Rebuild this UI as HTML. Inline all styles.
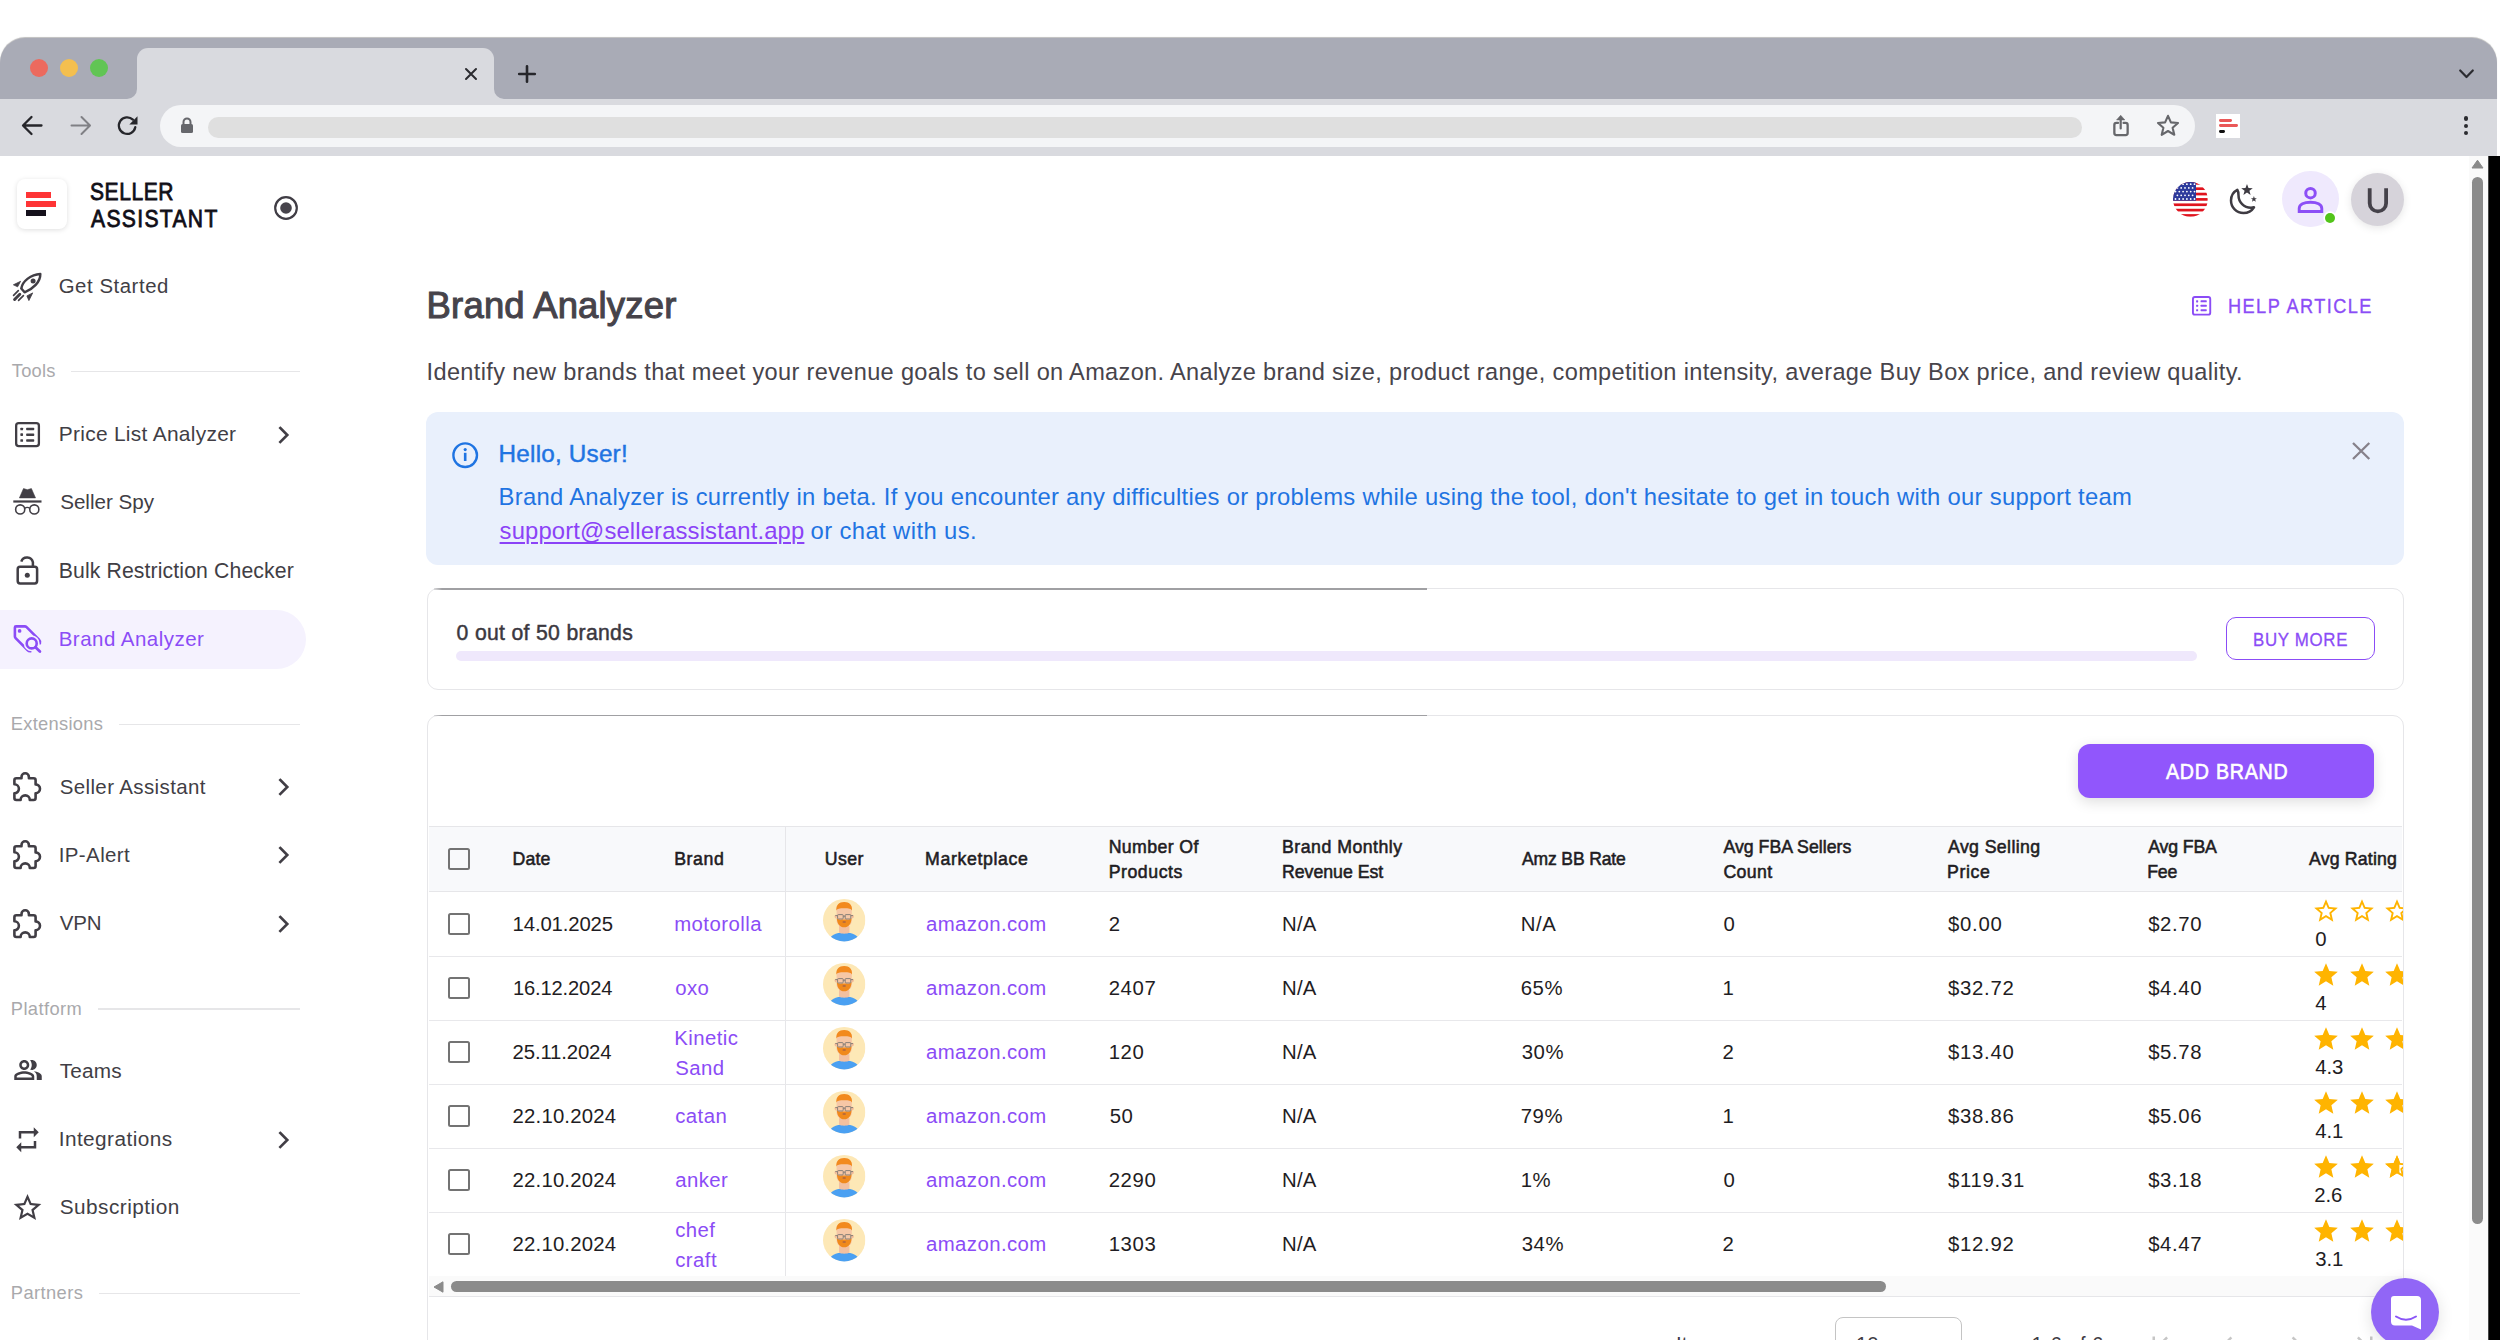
<!DOCTYPE html>
<html><head><meta charset="utf-8"><title>Brand Analyzer</title>
<style>
html,body{margin:0;padding:0;background:#fff;}
body{width:2500px;height:1340px;overflow:hidden;font-family:"Liberation Sans",sans-serif;}
#root{position:relative;width:2500px;height:1340px;overflow:hidden;background:#fff;}
.a{position:absolute;}
.t{position:absolute;white-space:nowrap;font-family:"Liberation Sans",sans-serif;}
svg{position:absolute;overflow:visible;}

</style></head><body><div id=root>
<div class=a style="left:0;top:38px;width:2497px;height:61px;background:#a9abb6;border-radius:25px 25px 0 0;box-shadow:0 -0.5px 0.8px rgba(0,0,0,0.25)"></div>
<div class=a style="left:0;top:99px;width:2497px;height:56.5px;background:#d9dadf"></div>
<div class=a style="left:30.3px;top:59.3px;width:18px;height:18px;border-radius:50%;background:#ec6a5e"></div>
<div class=a style="left:60.0px;top:59.3px;width:18px;height:18px;border-radius:50%;background:#f4bf4f"></div>
<div class=a style="left:90.0px;top:59.3px;width:18px;height:18px;border-radius:50%;background:#61c554"></div>
<div class=a style="left:137px;top:48px;width:357px;height:51px;background:#d9dadf;border-radius:11px 11px 0 0"></div>
<svg style="left:127px;top:89px" width="10" height="10"><path d="M0 10 A10 10 0 0 0 10 0 L10 10 Z" fill="#d9dadf"/></svg>
<svg style="left:494px;top:89px" width="10" height="10"><path d="M0 0 A10 10 0 0 0 10 10 L0 10 Z" fill="#d9dadf"/></svg>
<svg style="left:464.8px;top:67.8px" width="12" height="12"><path d="M1 1L11 11M11 1L1 11" stroke="#2b2b30" stroke-width="2" stroke-linecap="round"/></svg>
<svg style="left:518.4px;top:65.2px" width="18" height="18"><path d="M9 1.2V16.8M1.2 9H16.8" stroke="#26262b" stroke-width="2.6" stroke-linecap="round"/></svg>
<svg style="left:2459px;top:69px" width="15" height="10"><path d="M1.2 1.5L7.5 8L13.8 1.5" fill="none" stroke="#2b2b30" stroke-width="2.2" stroke-linecap="round" stroke-linejoin="round"/></svg>
<svg style="left:21px;top:115px" width="22" height="21"><path d="M20.5 10.5H2.5M10.5 2L2 10.5L10.5 19" fill="none" stroke="#26262b" stroke-width="2.3" stroke-linecap="round" stroke-linejoin="round"/></svg>
<svg style="left:69.5px;top:115px" width="22" height="21"><path d="M1.5 10.5H19.5M11.5 2L20 10.5L11.5 19" fill="none" stroke="#808085" stroke-width="2" stroke-linecap="round" stroke-linejoin="round"/></svg>
<svg style="left:116px;top:114px" width="24" height="24"><path d="M19.3 13.2A8.3 8.3 0 1 1 16.9 5.6" fill="none" stroke="#26262b" stroke-width="2.3" stroke-linecap="round"/><path d="M21.5 2.2V10.4H13.3Z" fill="#26262b"/></svg>
<div class=a style="left:160px;top:105.2px;width:2035px;height:41.4px;background:#f4f5f7;border-radius:21px"></div>
<svg style="left:180px;top:117px" width="14" height="17"><path d="M3.5 7V5A3.5 3.5 0 0 1 10.5 5V7" fill="none" stroke="#66676c" stroke-width="2"/><rect x="1" y="7" width="12" height="9" rx="1.5" fill="#66676c"/></svg>
<div class=a style="left:208px;top:117.2px;width:1874px;height:20.5px;background:#dfdfdf;border-radius:10.25px"></div>
<svg style="left:2110px;top:113px" width="22" height="24"><path d="M10.7 2.3L14.8 6.9H6.6Z" fill="#66676b" stroke="#66676b" stroke-width="0.6" stroke-linejoin="round"/><path d="M10.7 6V15.4" stroke="#66676b" stroke-width="2.2" stroke-linecap="round"/><path d="M8 9.95H6.35A2 2 0 0 0 4.35 11.95V20.05A2 2 0 0 0 6.35 22.05H15.65A2 2 0 0 0 17.65 20.05V11.95A2 2 0 0 0 15.65 9.95H13.6" fill="none" stroke="#66676b" stroke-width="2.3" stroke-linecap="round"/></svg>
<svg style="left:2156px;top:114px" width="24" height="23"><path d="M12 1.8L14.9 8.4L22 9L16.6 13.7L18.3 20.8L12 17L5.7 20.8L7.4 13.7L2 9L9.1 8.4Z" fill="none" stroke="#66676b" stroke-width="2.1" stroke-linejoin="round"/></svg>
<div class=a style="left:2216px;top:114px;width:24px;height:24px;background:#fff"></div>
<div class=a style="left:2218.5px;top:118.8px;width:13.5px;height:2.8px;background:#ea5858;border-radius:1.4px"></div>
<div class=a style="left:2218.5px;top:124.2px;width:19.2px;height:2.9px;background:#ea5858;border-radius:1.4px"></div>
<div class=a style="left:2218.5px;top:129.9px;width:6.6px;height:2.8px;background:#111;border-radius:1.4px"></div>
<div class=a style="left:2463.8px;top:116.3px;width:4.4px;height:4.4px;border-radius:50%;background:#2b2b30"></div>
<div class=a style="left:2463.8px;top:123.8px;width:4.4px;height:4.4px;border-radius:50%;background:#2b2b30"></div>
<div class=a style="left:2463.8px;top:131.1px;width:4.4px;height:4.4px;border-radius:50%;background:#2b2b30"></div>
<div class=a style="left:2487.6px;top:156px;width:12.4px;height:1184px;background:linear-gradient(90deg,#777 0,#000 1.2px)"></div>
<div class=a style="left:2469px;top:155.5px;width:18.6px;height:1185px;background:#fafafa"></div>
<svg style="left:2471px;top:159px" width="13" height="10"><path d="M6.5 1.2L12 9H1Z" fill="#8a8a8a" stroke="#8a8a8a" stroke-width="1" stroke-linejoin="round"/></svg>
<div class=a style="left:2472px;top:177px;width:11px;height:1047px;background:#8b8b8b;border-radius:5.5px"></div>
<div class=a style="left:16.5px;top:179px;width:50px;height:50px;background:#fff;border-radius:8px;box-shadow:0 1px 5px rgba(0,0,0,0.13)"></div>
<div class=a style="left:26px;top:192.3px;width:24.8px;height:5.8px;background:#fe3435"></div>
<div class=a style="left:26px;top:201.2px;width:30px;height:5.8px;background:#fe3435"></div>
<div class=a style="left:26px;top:210.3px;width:19.7px;height:5.7px;background:#15111c"></div>
<div class=t style="left:90.14px;top:180.02px;font-size:24.42px;line-height:24.42px;color:#100e16;font-weight:400;letter-spacing:0.673px;transform:scaleX(0.8600);transform-origin:0 0;-webkit-text-stroke:0.8px #100e16;">SELLER</div>
<div class=t style="left:91.00px;top:206.89px;font-size:23.98px;line-height:23.98px;color:#100e16;font-weight:400;letter-spacing:1.512px;transform:scaleX(0.8800);transform-origin:0 0;-webkit-text-stroke:0.8px #100e16;">ASSISTANT</div>
<svg style="left:274px;top:195.5px" width="24" height="24"><circle cx="12" cy="12" r="10.8" fill="none" stroke="#403d45" stroke-width="2.2"/><circle cx="12" cy="12" r="5.8" fill="#46434b"/></svg>
<svg style="left:0px;top:265px" width="60" height="45" viewBox="0 265 60 45"><path d="M21.3 288.5C22.5 281 31 274.5 40.3 274C40.5 282 33 289 24.6 292.3Z" fill="none" stroke="#413e45" stroke-width="2.5" stroke-linejoin="round"/><circle cx="33.1" cy="281" r="2.5" fill="#413e45"/><path d="M13.4 284.8L20.6 281.3L17.6 286.8Z" fill="#413e45" stroke="#413e45" stroke-width="0.8" stroke-linejoin="round"/><path d="M26.9 295.9L32.7 292.9L28.9 300.6Z" fill="#413e45" stroke="#413e45" stroke-width="0.8" stroke-linejoin="round"/><path d="M13.6 295.3L18.3 290.6M18.6 300.3L23.4 295.6" stroke="#413e45" stroke-width="1.7" stroke-linecap="round"/><path d="M14.6 299.5L19.8 294.3" stroke="#413e45" stroke-width="3" stroke-linecap="round"/></svg>
<div class=t style="left:58.70px;top:275.87px;font-size:20.35px;line-height:20.35px;color:#413e45;font-weight:400;letter-spacing:0.565px;">Get Started</div>
<div class=t style="left:11.80px;top:362.39px;font-size:18.31px;line-height:18.31px;color:#a9a9ac;font-weight:400;letter-spacing:0.234px;">Tools</div>
<div class=a style="left:71.3px;top:370.75px;width:228.7px;height:1.5px;background:#e6e6e8"></div>
<svg style="left:12.85px;top:419.90px" width="29.05" height="29.20" viewBox="12.85 419.90 29.05 29.20"><rect x="16.00" y="423.05" width="22.75" height="22.90" rx="2.60" fill="none" stroke="#413e45" stroke-width="2.3"/><rect x="20.20" y="427.55" width="2.70" height="2.70" rx="0.70" fill="#413e45"/><rect x="26.00" y="427.60" width="8.10" height="2.60" rx="0.70" fill="#413e45"/><rect x="20.20" y="433.25" width="2.70" height="2.70" rx="0.70" fill="#413e45"/><rect x="26.00" y="433.30" width="8.10" height="2.60" rx="0.70" fill="#413e45"/><rect x="20.20" y="439.05" width="2.70" height="2.70" rx="0.70" fill="#413e45"/><rect x="26.00" y="439.10" width="8.10" height="2.60" rx="0.70" fill="#413e45"/></svg>
<div class=t style="left:58.70px;top:424.08px;font-size:20.93px;line-height:20.93px;color:#413e45;font-weight:400;letter-spacing:0.295px;">Price List Analyzer</div>
<svg style="left:277.5px;top:425.5px" width="12" height="18"><path d="M2.3 2L9.3 9L2.3 16" fill="none" stroke="#413e45" stroke-width="2.6" stroke-linecap="square" stroke-linejoin="miter"/></svg>
<svg style="left:0px;top:480px" width="60" height="40" viewBox="0 480 60 40"><path d="M19.4 497.9L23.5 488.6L27.3 489.7L31.4 488.6L35.5 497.9Z" fill="#413e45" stroke="#413e45" stroke-width="0.6" stroke-linejoin="round"/><rect x="13.3" y="500.4" width="28.2" height="2.2" fill="#413e45"/><circle cx="20.2" cy="509.4" r="4.55" fill="none" stroke="#413e45" stroke-width="1.6"/><circle cx="34.3" cy="509.4" r="4.55" fill="none" stroke="#413e45" stroke-width="1.6"/><path d="M24.6 508.5Q27.3 506.3 29.9 508.5" fill="none" stroke="#413e45" stroke-width="1.4"/></svg>
<div class=t style="left:60.20px;top:491.52px;font-size:20.64px;line-height:20.64px;color:#413e45;font-weight:400;letter-spacing:-0.021px;">Seller Spy</div>
<svg style="left:0px;top:540px" width="60" height="130" viewBox="0 540 60 130"><rect x="17.7" y="566.8" width="19.4" height="16.6" rx="2.4" fill="none" stroke="#413e45" stroke-width="2.5"/><path d="M21.3 561.6A6 6 0 0 1 32.9 562.3V566.8" fill="none" stroke="#413e45" stroke-width="2.5"/><circle cx="27.3" cy="575.3" r="2.5" fill="#413e45"/></svg>
<div class=t style="left:58.70px;top:560.03px;font-size:21.22px;line-height:21.22px;color:#413e45;font-weight:400;letter-spacing:0.120px;">Bulk Restriction Checker</div>
<div class=a style="left:0;top:610px;width:306px;height:59px;background:#f5f2fe;border-radius:0 29.5px 29.5px 0"></div>
<svg style="left:0px;top:610px" width="60" height="60" viewBox="0 610 60 60"><path d="M39.9 643.2Q40.6 641.2 38.8 639.4L26.6 627.2Q25.8 626.4 24.7 626.4L16 626.4Q14.9 626.4 14.9 627.5L14.9 636.5Q14.9 637.4 15.6 638.1L27.5 650Q28.7 651.2 30.3 651.3" fill="none" stroke="#8b4cf6" stroke-width="2.6" stroke-linecap="round"/><circle cx="19.6" cy="630.9" r="1.85" fill="#8b4cf6"/><circle cx="31.7" cy="643.4" r="5.6" fill="none" stroke="#f5f2fe" stroke-width="4.6"/><circle cx="31.7" cy="643.4" r="5" fill="none" stroke="#8b4cf6" stroke-width="2.6"/><path d="M35.5 647.3L39.9 651.6" stroke="#8b4cf6" stroke-width="2.8" stroke-linecap="round"/></svg>
<div class=t style="left:58.70px;top:628.95px;font-size:20.49px;line-height:20.49px;color:#8b4cf6;font-weight:400;letter-spacing:0.482px;">Brand Analyzer</div>
<div class=t style="left:10.80px;top:715.19px;font-size:18.31px;line-height:18.31px;color:#a9a9ac;font-weight:400;letter-spacing:0.294px;">Extensions</div>
<div class=a style="left:118.8px;top:723.85px;width:181.2px;height:1.5px;background:#e6e6e8"></div>
<svg style="left:0px;top:765.0px" width="60" height="45" viewBox="0 765 60 45"><path d="M14.4 780.3Q14.4 778.3 16.4 778.3L21.5 778.3L21.5 777A3.7 3.7 0 0 1 28.9 777L28.9 778.3L33.6 778.3Q35.6 778.3 35.6 780.3L35.6 784.4A4.4 4.4 0 0 1 35.6 793.2L35.6 798Q35.6 800 33.6 800L29.8 800A4.6 4.6 0 0 0 20.6 800L16.4 800Q14.4 800 14.4 798L14.4 793.3A4.5 4.5 0 0 0 14.4 784.3Z" fill="none" stroke="#413e45" stroke-width="2.6" stroke-linejoin="round"/></svg>
<div class=t style="left:59.70px;top:776.55px;font-size:20.49px;line-height:20.49px;color:#413e45;font-weight:400;letter-spacing:0.381px;">Seller Assistant</div>
<svg style="left:277.5px;top:778.3px" width="12" height="18"><path d="M2.3 2L9.3 9L2.3 16" fill="none" stroke="#413e45" stroke-width="2.6" stroke-linecap="square" stroke-linejoin="miter"/></svg>
<svg style="left:0px;top:833.4px" width="60" height="45" viewBox="0 765 60 45"><path d="M14.4 780.3Q14.4 778.3 16.4 778.3L21.5 778.3L21.5 777A3.7 3.7 0 0 1 28.9 777L28.9 778.3L33.6 778.3Q35.6 778.3 35.6 780.3L35.6 784.4A4.4 4.4 0 0 1 35.6 793.2L35.6 798Q35.6 800 33.6 800L29.8 800A4.6 4.6 0 0 0 20.6 800L16.4 800Q14.4 800 14.4 798L14.4 793.3A4.5 4.5 0 0 0 14.4 784.3Z" fill="none" stroke="#413e45" stroke-width="2.6" stroke-linejoin="round"/></svg>
<div class=t style="left:58.70px;top:844.65px;font-size:20.49px;line-height:20.49px;color:#413e45;font-weight:400;letter-spacing:0.400px;">IP-Alert</div>
<svg style="left:277.5px;top:846.3px" width="12" height="18"><path d="M2.3 2L9.3 9L2.3 16" fill="none" stroke="#413e45" stroke-width="2.6" stroke-linecap="square" stroke-linejoin="miter"/></svg>
<svg style="left:0px;top:901.8px" width="60" height="45" viewBox="0 765 60 45"><path d="M14.4 780.3Q14.4 778.3 16.4 778.3L21.5 778.3L21.5 777A3.7 3.7 0 0 1 28.9 777L28.9 778.3L33.6 778.3Q35.6 778.3 35.6 780.3L35.6 784.4A4.4 4.4 0 0 1 35.6 793.2L35.6 798Q35.6 800 33.6 800L29.8 800A4.6 4.6 0 0 0 20.6 800L16.4 800Q14.4 800 14.4 798L14.4 793.3A4.5 4.5 0 0 0 14.4 784.3Z" fill="none" stroke="#413e45" stroke-width="2.6" stroke-linejoin="round"/></svg>
<div class=t style="left:59.70px;top:913.25px;font-size:20.49px;line-height:20.49px;color:#413e45;font-weight:400;letter-spacing:-0.150px;">VPN</div>
<svg style="left:277.5px;top:915.0px" width="12" height="18"><path d="M2.3 2L9.3 9L2.3 16" fill="none" stroke="#413e45" stroke-width="2.6" stroke-linecap="square" stroke-linejoin="miter"/></svg>
<div class=t style="left:10.80px;top:999.89px;font-size:18.31px;line-height:18.31px;color:#a9a9ac;font-weight:400;letter-spacing:0.403px;">Platform</div>
<div class=a style="left:97.5px;top:1008.25px;width:202.5px;height:1.5px;background:#e6e6e8"></div>
<svg style="left:12.5px;top:1059px" width="30" height="23" viewBox="0 4 24 17"><path fill="#413e45" d="M16.67 13.13C18.04 14.06 19 15.32 19 17v3h4v-3c0-2.18-3.57-3.47-6.33-3.87zM15 12c2.21 0 4-1.79 4-4s-1.79-4-4-4c-.47 0-.91.1-1.33.24C14.5 5.27 15 6.58 15 8s-.5 2.73-1.33 3.76c.42.14.86.24 1.33.24zm-6 0c2.21 0 4-1.79 4-4s-1.79-4-4-4-4 1.79-4 4 1.79 4 4 4zm0-6c1.1 0 2 .9 2 2s-.9 2-2 2-2-.9-2-2 .9-2 2-2zm0 7c-2.67 0-8 1.34-8 4v3h16v-3c0-2.66-5.33-4-8-4zm6 5H3v-.99C3.2 16.29 6.3 15 9 15s5.8 1.29 6 2v1z"/></svg>
<div class=t style="left:59.70px;top:1060.60px;font-size:20.79px;line-height:20.79px;color:#413e45;font-weight:400;letter-spacing:0.181px;">Teams</div>
<svg style="left:14px;top:1126px" width="27" height="27.5" viewBox="3 1 18 22"><path fill="#413e45" d="M7 7h10v3l4-4-4-4v3H5v6h2V7zm10 10H7v-3l-4 4 4 4v-3h12v-6h-2v4z"/></svg>
<div class=t style="left:58.70px;top:1129.30px;font-size:20.79px;line-height:20.79px;color:#413e45;font-weight:400;letter-spacing:0.443px;">Integrations</div>
<svg style="left:277.5px;top:1131.3px" width="12" height="18"><path d="M2.3 2L9.3 9L2.3 16" fill="none" stroke="#413e45" stroke-width="2.6" stroke-linecap="square" stroke-linejoin="miter"/></svg>
<svg style="left:12.5px;top:1193px" width="29" height="28" viewBox="1.5 1.5 21 20"><path fill="#413e45" d="M22 9.24l-7.19-.62L12 2 9.19 8.63 2 9.24l5.46 4.73L5.82 21 12 17.27 18.18 21l-1.63-7.03L22 9.24zM12 15.4l-3.76 2.27 1-4.28-3.32-2.88 4.38-.38L12 6.1l1.71 4.04 4.38.38-3.32 2.88 1 4.28L12 15.4z"/></svg>
<div class=t style="left:59.70px;top:1197.00px;font-size:20.79px;line-height:20.79px;color:#413e45;font-weight:400;letter-spacing:0.471px;">Subscription</div>
<div class=t style="left:10.80px;top:1283.59px;font-size:18.31px;line-height:18.31px;color:#a9a9ac;font-weight:400;letter-spacing:0.414px;">Partners</div>
<div class=a style="left:98.7px;top:1292.75px;width:201.3px;height:1.5px;background:#e6e6e8"></div>
<svg style="left:2172.6px;top:181.8px" width="34.8" height="34.8" viewBox="0 0 34.8 34.8"><defs><clipPath id="fc"><circle cx="17.4" cy="17.4" r="17.4"/></clipPath></defs><g clip-path="url(#fc)"><rect width="34.8" height="34.8" fill="#fff"/><rect x="0" y="0.00" width="34.8" height="2.68" fill="#e0141e"/><rect x="0" y="5.35" width="34.8" height="2.68" fill="#e0141e"/><rect x="0" y="10.71" width="34.8" height="2.68" fill="#e0141e"/><rect x="0" y="16.06" width="34.8" height="2.68" fill="#e0141e"/><rect x="0" y="21.42" width="34.8" height="2.68" fill="#e0141e"/><rect x="0" y="26.77" width="34.8" height="2.68" fill="#e0141e"/><rect x="0" y="32.12" width="34.8" height="2.68" fill="#e0141e"/><rect x="0" y="0" width="23" height="18.74" fill="#2d3a9c"/><circle cx="2.5" cy="2.2" r="0.9" fill="#fff"/><circle cx="6.3" cy="2.2" r="0.9" fill="#fff"/><circle cx="10.1" cy="2.2" r="0.9" fill="#fff"/><circle cx="13.9" cy="2.2" r="0.9" fill="#fff"/><circle cx="17.7" cy="2.2" r="0.9" fill="#fff"/><circle cx="21.5" cy="2.2" r="0.9" fill="#fff"/><circle cx="4.4" cy="5.9" r="0.9" fill="#fff"/><circle cx="8.2" cy="5.9" r="0.9" fill="#fff"/><circle cx="12.0" cy="5.9" r="0.9" fill="#fff"/><circle cx="15.8" cy="5.9" r="0.9" fill="#fff"/><circle cx="19.6" cy="5.9" r="0.9" fill="#fff"/><circle cx="2.5" cy="9.6" r="0.9" fill="#fff"/><circle cx="6.3" cy="9.6" r="0.9" fill="#fff"/><circle cx="10.1" cy="9.6" r="0.9" fill="#fff"/><circle cx="13.9" cy="9.6" r="0.9" fill="#fff"/><circle cx="17.7" cy="9.6" r="0.9" fill="#fff"/><circle cx="21.5" cy="9.6" r="0.9" fill="#fff"/><circle cx="4.4" cy="13.3" r="0.9" fill="#fff"/><circle cx="8.2" cy="13.3" r="0.9" fill="#fff"/><circle cx="12.0" cy="13.3" r="0.9" fill="#fff"/><circle cx="15.8" cy="13.3" r="0.9" fill="#fff"/><circle cx="19.6" cy="13.3" r="0.9" fill="#fff"/><circle cx="2.5" cy="17.0" r="0.9" fill="#fff"/><circle cx="6.3" cy="17.0" r="0.9" fill="#fff"/><circle cx="10.1" cy="17.0" r="0.9" fill="#fff"/><circle cx="13.9" cy="17.0" r="0.9" fill="#fff"/><circle cx="17.7" cy="17.0" r="0.9" fill="#fff"/><circle cx="21.5" cy="17.0" r="0.9" fill="#fff"/></g></svg>
<svg style="left:2228.6px;top:182.6px" width="30" height="32" viewBox="0 0 30 32"><path d="M8.3 6.8C4 9 2 13 2 17.5C2 24.5 7.5 30 14.5 30C19 30 22.8 27.8 25 24.3C24 24.6 23 24.8 22 24.8C15 24.8 9.5 19.2 9.5 12.3C9.5 10.3 9.5 8.5 8.3 6.8Z" fill="none" stroke="#3e3b42" stroke-width="2.5" stroke-linejoin="round"/><path d="M19.8 2.2L21.3 6.3L25.6 6.4L22.2 9L23.4 13.1L19.8 10.7L16.2 13.1L17.4 9L14 6.4L18.3 6.3Z" fill="#3e3b42" transform="translate(-1.8,-1.2)"/><path d="M26.5 15.5L27.3 17.6L29.5 17.7L27.8 19L28.4 21.1L26.5 19.9L24.6 21.1L25.2 19L23.5 17.7L25.7 17.6Z" fill="#3e3b42" transform="translate(-1.6,-2.4) scale(1.0)"/></svg>
<div class=a style="left:2282.4px;top:170.7px;width:56.6px;height:56.6px;border-radius:50%;background:#efe9fd"></div>
<svg style="left:2296px;top:185px" width="30" height="30" viewBox="0 0 30 30"><circle cx="14.5" cy="8.2" r="4.75" fill="none" stroke="#8c4ff6" stroke-width="3"/><path d="M3.2 26.5V23.5C3.2 19.5 8 17.2 14.5 17.2C21 17.2 25.8 19.5 25.8 23.5V26.5Z" fill="none" stroke="#8c4ff6" stroke-width="2.9" stroke-linejoin="miter"/></svg>
<div class=a style="left:2325px;top:213.2px;width:10px;height:10px;border-radius:50%;background:#52c41a;box-shadow:0 0 0 1.7px #fff"></div>
<div class=a style="left:2350.8px;top:172.7px;width:53px;height:53px;border-radius:50%;background:#d6d3da;box-shadow:0 2px 8px rgba(0,0,0,0.10)"></div>
<svg style="left:2360px;top:180px" width="36" height="40" viewBox="2360 180 36 40"><path d="M2369.7 188.2V203.2A8.2 8.2 0 0 0 2386.1 203.2V188.2" fill="none" stroke="#45424a" stroke-width="3.8"/></svg>
<div class=t style="left:426.60px;top:287.51px;font-size:36.48px;line-height:36.48px;color:#46434a;font-weight:400;letter-spacing:0.185px;-webkit-text-stroke:1.05px #46434a;">Brand Analyzer</div>
<svg style="left:2190.00px;top:294.00px" width="23.20" height="23.60" viewBox="2190.00 294.00 23.20 23.60"><rect x="2192.95" y="296.95" width="17.30" height="17.70" rx="1.99" fill="none" stroke="#8b4cf6" stroke-width="1.9"/><rect x="2196.10" y="300.33" width="2.07" height="2.07" rx="0.54" fill="#8b4cf6"/><rect x="2200.55" y="300.37" width="6.21" height="1.99" rx="0.54" fill="#8b4cf6"/><rect x="2196.10" y="304.70" width="2.07" height="2.07" rx="0.54" fill="#8b4cf6"/><rect x="2200.55" y="304.74" width="6.21" height="1.99" rx="0.54" fill="#8b4cf6"/><rect x="2196.10" y="309.14" width="2.07" height="2.07" rx="0.54" fill="#8b4cf6"/><rect x="2200.55" y="309.18" width="6.21" height="1.99" rx="0.54" fill="#8b4cf6"/></svg>
<div class=t style="left:2227.52px;top:296.42px;font-size:20.64px;line-height:20.64px;color:#8b4cf6;font-weight:400;letter-spacing:1.650px;transform:scaleX(0.8800);transform-origin:0 0;-webkit-text-stroke:0.35px #8b4cf6;">HELP ARTICLE</div>
<div class=t style="left:426.60px;top:360.76px;font-size:23.55px;line-height:23.55px;color:#47444b;font-weight:400;letter-spacing:0.346px;">Identify new brands that meet your revenue goals to sell on Amazon. Analyze brand size, product range, competition intensity, average Buy Box price, and review quality.</div>
<div class=a style="left:426.4px;top:412.1px;width:1977.8px;height:152.8px;background:#e9f0fc;border-radius:12px"></div>
<svg style="left:451.5px;top:441.6px" width="26.4" height="26.4" viewBox="0 0 26.4 26.4"><circle cx="13.2" cy="13.2" r="11.8" fill="none" stroke="#1f74e2" stroke-width="2.4"/><rect x="11.9" y="10.8" width="2.6" height="8.2" fill="#1f74e2"/><circle cx="13.2" cy="7.6" r="1.55" fill="#1f74e2"/></svg>
<div class=t style="left:498.60px;top:441.85px;font-size:24.27px;line-height:24.27px;color:#1f74e2;font-weight:400;letter-spacing:0.208px;-webkit-text-stroke:0.45px #1f74e2;">Hello, User!</div>
<div class=t style="left:498.60px;top:484.62px;font-size:23.84px;line-height:23.84px;color:#1f74e2;font-weight:400;letter-spacing:0.280px;">Brand Analyzer is currently in beta. If you encounter any difficulties or problems while using the tool, don't hesitate to get in touch with our support team</div>
<div class=t style="left:499.60px;top:518.82px;font-size:23.84px;line-height:23.84px;color:#8b42f7;font-weight:400;letter-spacing:0.140px;text-decoration:underline;text-decoration-thickness:1.6px;text-underline-offset:3px;">support@sellerassistant.app</div>
<div class=t style="left:810.50px;top:518.82px;font-size:23.84px;line-height:23.84px;color:#1f74e2;font-weight:400;letter-spacing:0.392px;">or chat with us.</div>
<svg style="left:2351.6px;top:441.8px" width="18.3" height="18" viewBox="0 0 18.3 18"><path d="M1 1L17.3 17M17.3 1L1 17" stroke="#86818a" stroke-width="2.3"/></svg>
<div class=a style="left:426.8px;top:588.3px;width:1977.6px;height:102.2px;border:1.8px solid #e6e6e9;border-radius:11px;box-sizing:border-box"></div>
<div class=a style="left:434px;top:588.3px;width:993px;height:1.9px;background:linear-gradient(90deg,rgba(160,160,163,0.3),#a0a0a3 8px)"></div>
<div class=t style="left:456.60px;top:622.23px;font-size:21.22px;line-height:21.22px;color:#3b383f;font-weight:400;letter-spacing:0.303px;-webkit-text-stroke:0.45px #3b383f;">0 out of 50 brands</div>
<div class=a style="left:456px;top:650.7px;width:1741px;height:10.5px;background:#efe8fc;border-radius:5.25px"></div>
<div class=a style="left:2225.5px;top:617.2px;width:149px;height:43px;border:1.8px solid #8b4cf6;border-radius:10px;box-sizing:border-box"></div>
<div class=t style="left:2252.92px;top:629.95px;font-size:19.19px;line-height:19.19px;color:#8b4cf6;font-weight:400;letter-spacing:0.760px;transform:scaleX(0.8800);transform-origin:0 0;-webkit-text-stroke:0.3px #8b4cf6;">BUY MORE</div>
<div class=a style="left:426.8px;top:714.5px;width:1977.6px;height:700px;border:1.8px solid #e6e6e9;border-radius:11px;box-sizing:border-box"></div>
<div class=a style="left:434px;top:714.5px;width:993px;height:1.9px;background:linear-gradient(90deg,rgba(160,160,163,0.3),#a0a0a3 8px)"></div>
<div class=a style="left:2077.6px;top:743.6px;width:296.8px;height:54.3px;background:#9156fc;border-radius:12px;box-shadow:0 4px 14px rgba(0,0,0,0.13)"></div>
<div class=t style="left:2166.00px;top:760.64px;font-size:21.80px;line-height:21.80px;color:#ffffff;font-weight:400;letter-spacing:0.851px;transform:scaleX(0.9000);transform-origin:0 0;-webkit-text-stroke:0.65px #fff;">ADD BRAND</div>
<div class=a style="left:428.5px;top:826px;width:1973.5px;height:66.4px;background:#f8f9fb;border-top:1.5px solid #e6e6e9;border-bottom:1.5px solid #e6e6e9;box-sizing:border-box"></div>
<div class=a style="left:784.5px;top:826px;width:1.5px;height:450px;background:#e6e6e9"></div>
<div class=a style="left:448px;top:848.4px;width:21.6px;height:21.6px;border:2.3px solid #737373;border-radius:2.5px;box-sizing:border-box"></div>
<div class=t style="left:512.60px;top:851.19px;font-size:17.73px;line-height:17.73px;color:#1f1d23;font-weight:400;letter-spacing:0.076px;-webkit-text-stroke:0.55px #1f1d23;">Date</div>
<div class=t style="left:674.20px;top:851.19px;font-size:17.73px;line-height:17.73px;color:#1f1d23;font-weight:400;letter-spacing:0.568px;-webkit-text-stroke:0.55px #1f1d23;">Brand</div>
<div class=t style="left:824.80px;top:851.19px;font-size:17.73px;line-height:17.73px;color:#1f1d23;font-weight:400;letter-spacing:0.430px;-webkit-text-stroke:0.55px #1f1d23;">User</div>
<div class=t style="left:925.00px;top:851.19px;font-size:17.73px;line-height:17.73px;color:#1f1d23;font-weight:400;letter-spacing:0.634px;-webkit-text-stroke:0.55px #1f1d23;">Marketplace</div>
<div class=t style="left:1108.70px;top:838.89px;font-size:17.73px;line-height:17.73px;color:#1f1d23;font-weight:400;letter-spacing:0.384px;-webkit-text-stroke:0.55px #1f1d23;">Number Of</div>
<div class=t style="left:1108.70px;top:863.79px;font-size:17.73px;line-height:17.73px;color:#1f1d23;font-weight:400;letter-spacing:0.534px;-webkit-text-stroke:0.55px #1f1d23;">Products</div>
<div class=t style="left:1282.00px;top:838.89px;font-size:17.73px;line-height:17.73px;color:#1f1d23;font-weight:400;letter-spacing:0.493px;-webkit-text-stroke:0.55px #1f1d23;">Brand Monthly</div>
<div class=t style="left:1282.00px;top:863.79px;font-size:17.73px;line-height:17.73px;color:#1f1d23;font-weight:400;letter-spacing:-0.023px;-webkit-text-stroke:0.55px #1f1d23;">Revenue Est</div>
<div class=t style="left:1521.70px;top:851.19px;font-size:17.73px;line-height:17.73px;color:#1f1d23;font-weight:400;letter-spacing:-0.150px;transform:scaleX(0.9896);transform-origin:0 0;-webkit-text-stroke:0.55px #1f1d23;">Amz BB Rate</div>
<div class=t style="left:1723.40px;top:838.89px;font-size:17.73px;line-height:17.73px;color:#1f1d23;font-weight:400;letter-spacing:0.020px;-webkit-text-stroke:0.55px #1f1d23;">Avg FBA Sellers</div>
<div class=t style="left:1723.40px;top:863.79px;font-size:17.73px;line-height:17.73px;color:#1f1d23;font-weight:400;letter-spacing:0.360px;-webkit-text-stroke:0.55px #1f1d23;">Count</div>
<div class=t style="left:1948.00px;top:838.89px;font-size:17.73px;line-height:17.73px;color:#1f1d23;font-weight:400;letter-spacing:0.383px;-webkit-text-stroke:0.55px #1f1d23;">Avg Selling</div>
<div class=t style="left:1947.00px;top:863.79px;font-size:17.73px;line-height:17.73px;color:#1f1d23;font-weight:400;letter-spacing:0.621px;-webkit-text-stroke:0.55px #1f1d23;">Price</div>
<div class=t style="left:2148.20px;top:838.89px;font-size:17.73px;line-height:17.73px;color:#1f1d23;font-weight:400;letter-spacing:-0.150px;-webkit-text-stroke:0.55px #1f1d23;">Avg FBA</div>
<div class=t style="left:2147.20px;top:863.79px;font-size:17.73px;line-height:17.73px;color:#1f1d23;font-weight:400;letter-spacing:-0.150px;-webkit-text-stroke:0.55px #1f1d23;">Fee</div>
<div class=t style="left:2309.00px;top:850.89px;font-size:17.73px;line-height:17.73px;color:#1f1d23;font-weight:400;letter-spacing:0.178px;-webkit-text-stroke:0.55px #1f1d23;">Avg Rating</div>
<div class=a style="left:448px;top:913.4px;width:21.6px;height:21.6px;border:2.3px solid #737373;border-radius:2.5px;box-sizing:border-box"></div>
<div class=t style="left:512.60px;top:913.57px;font-size:20.35px;line-height:20.35px;color:#1f1d23;font-weight:400;letter-spacing:-0.150px;">14.01.2025</div>
<div class=t style="left:674.20px;top:913.57px;font-size:20.35px;line-height:20.35px;color:#8b4cf6;font-weight:400;letter-spacing:0.450px;">motorolla</div>
<svg style="left:823.1px;top:898.8px" width="42.4" height="42.4" viewBox="0 0 42.4 42.4"><defs><clipPath id="av0"><circle cx="21.2" cy="21.2" r="21.2"/></clipPath></defs><g clip-path="url(#av0)"><rect width="42.4" height="42.4" fill="#fde8b6"/><path d="M5 44C6.5 36.5 12 33.6 21.2 33.6C30.4 33.6 36 36.5 37.5 44Z" fill="#4aa0f2"/><path d="M16 27H26.4V33.6C24.5 35.2 18 35.2 16 33.6Z" fill="#f3c0a0"/><ellipse cx="12.8" cy="17.6" rx="1.2" ry="1.8" fill="#f3bc98"/><ellipse cx="29.6" cy="17.6" rx="1.2" ry="1.8" fill="#f3bc98"/><path d="M13.6 9.5C13.6 6 16.5 3.4 21.2 3.4C25.9 3.4 28.8 6 28.8 9.5V21.5C28.8 25.5 25.5 28.2 21.2 28.2C16.9 28.2 13.6 25.5 13.6 21.5Z" fill="#f6c7a6"/><path d="M13.4 11.5C13 6 15.8 3 21.2 3C26.6 3 29.4 6 29 11.5C28 9.5 26 9.2 21.2 9.2C16.4 9.2 14.4 9.5 13.4 11.5Z" fill="#f28a1e"/><path d="M13.8 19C14.2 25.5 17 28.3 21.2 28.3C25.4 28.3 28.2 25.5 28.6 19C27.3 21.2 25.8 20.6 21.2 20.6C16.6 20.6 15.1 21.2 13.8 19Z" fill="#f0891c"/><ellipse cx="21.2" cy="23" rx="1.8" ry="1" fill="#b96a3a"/><rect x="14.6" y="15.6" width="5.6" height="4.4" rx="0.8" fill="none" stroke="#7d7873" stroke-width="0.9"/><rect x="22.2" y="15.6" width="5.6" height="4.4" rx="0.8" fill="none" stroke="#7d7873" stroke-width="0.9"/><path d="M20.2 17.2H22.2M12.3 16.6H14.6M27.8 16.6H30.1" stroke="#7d7873" stroke-width="0.9"/></g></svg>
<div class=t style="left:926.00px;top:913.57px;font-size:20.35px;line-height:20.35px;color:#8b4cf6;font-weight:400;letter-spacing:0.418px;">amazon.com</div>
<div class=t style="left:1108.70px;top:913.57px;font-size:20.35px;line-height:20.35px;color:#1f1d23;font-weight:400;letter-spacing:0.600px;">2</div>
<div class=t style="left:1282.00px;top:913.57px;font-size:20.35px;line-height:20.35px;color:#1f1d23;font-weight:400;letter-spacing:0.200px;">N/A</div>
<div class=t style="left:1520.70px;top:913.57px;font-size:20.35px;line-height:20.35px;color:#1f1d23;font-weight:400;letter-spacing:0.600px;">N/A</div>
<div class=t style="left:1723.40px;top:913.57px;font-size:20.35px;line-height:20.35px;color:#1f1d23;font-weight:400;letter-spacing:0.000px;">0</div>
<div class=t style="left:1948.00px;top:913.57px;font-size:20.35px;line-height:20.35px;color:#1f1d23;font-weight:400;letter-spacing:0.700px;">$0.00</div>
<div class=t style="left:2148.20px;top:913.57px;font-size:20.35px;line-height:20.35px;color:#1f1d23;font-weight:400;letter-spacing:0.600px;">$2.70</div>
<svg style="left:2313.2px;top:898.0px" width="26" height="26" viewBox="1 1 22 22"><path d="M22 9.24l-7.19-.62L12 2 9.19 8.63 2 9.24l5.46 4.73L5.82 21 12 17.27 18.18 21l-1.63-7.03L22 9.24zM12 15.4l-3.76 2.27 1-4.28-3.32-2.88 4.38-.38L12 6.1l1.71 4.04 4.38.38-3.32 2.88 1 4.28L12 15.4z" fill="#ffb400"/></svg>
<svg style="left:2348.8px;top:898.0px" width="26" height="26" viewBox="1 1 22 22"><path d="M22 9.24l-7.19-.62L12 2 9.19 8.63 2 9.24l5.46 4.73L5.82 21 12 17.27 18.18 21l-1.63-7.03L22 9.24zM12 15.4l-3.76 2.27 1-4.28-3.32-2.88 4.38-.38L12 6.1l1.71 4.04 4.38.38-3.32 2.88 1 4.28L12 15.4z" fill="#ffb400"/></svg>
<svg style="left:2384.2px;top:898.0px" width="26" height="26" viewBox="1 1 22 22"><path d="M22 9.24l-7.19-.62L12 2 9.19 8.63 2 9.24l5.46 4.73L5.82 21 12 17.27 18.18 21l-1.63-7.03L22 9.24zM12 15.4l-3.76 2.27 1-4.28-3.32-2.88 4.38-.38L12 6.1l1.71 4.04 4.38.38-3.32 2.88 1 4.28L12 15.4z" fill="#ffb400"/></svg>
<div class=t style="left:2315.20px;top:929.47px;font-size:20.35px;line-height:20.35px;color:#1f1d23;font-weight:400;letter-spacing:-0.100px;">0</div>
<div class=a style="left:428.5px;top:955.65px;width:1973.5px;height:1.5px;background:#e8e8eb"></div>
<div class=a style="left:448px;top:977.4px;width:21.6px;height:21.6px;border:2.3px solid #737373;border-radius:2.5px;box-sizing:border-box"></div>
<div class=t style="left:512.61px;top:977.57px;font-size:20.35px;line-height:20.35px;color:#1f1d23;font-weight:400;letter-spacing:-0.150px;transform:scaleX(0.9891);transform-origin:0 0;">16.12.2024</div>
<div class=t style="left:675.20px;top:977.57px;font-size:20.35px;line-height:20.35px;color:#8b4cf6;font-weight:400;letter-spacing:0.450px;">oxo</div>
<svg style="left:823.1px;top:962.8px" width="42.4" height="42.4" viewBox="0 0 42.4 42.4"><defs><clipPath id="av1"><circle cx="21.2" cy="21.2" r="21.2"/></clipPath></defs><g clip-path="url(#av1)"><rect width="42.4" height="42.4" fill="#fde8b6"/><path d="M5 44C6.5 36.5 12 33.6 21.2 33.6C30.4 33.6 36 36.5 37.5 44Z" fill="#4aa0f2"/><path d="M16 27H26.4V33.6C24.5 35.2 18 35.2 16 33.6Z" fill="#f3c0a0"/><ellipse cx="12.8" cy="17.6" rx="1.2" ry="1.8" fill="#f3bc98"/><ellipse cx="29.6" cy="17.6" rx="1.2" ry="1.8" fill="#f3bc98"/><path d="M13.6 9.5C13.6 6 16.5 3.4 21.2 3.4C25.9 3.4 28.8 6 28.8 9.5V21.5C28.8 25.5 25.5 28.2 21.2 28.2C16.9 28.2 13.6 25.5 13.6 21.5Z" fill="#f6c7a6"/><path d="M13.4 11.5C13 6 15.8 3 21.2 3C26.6 3 29.4 6 29 11.5C28 9.5 26 9.2 21.2 9.2C16.4 9.2 14.4 9.5 13.4 11.5Z" fill="#f28a1e"/><path d="M13.8 19C14.2 25.5 17 28.3 21.2 28.3C25.4 28.3 28.2 25.5 28.6 19C27.3 21.2 25.8 20.6 21.2 20.6C16.6 20.6 15.1 21.2 13.8 19Z" fill="#f0891c"/><ellipse cx="21.2" cy="23" rx="1.8" ry="1" fill="#b96a3a"/><rect x="14.6" y="15.6" width="5.6" height="4.4" rx="0.8" fill="none" stroke="#7d7873" stroke-width="0.9"/><rect x="22.2" y="15.6" width="5.6" height="4.4" rx="0.8" fill="none" stroke="#7d7873" stroke-width="0.9"/><path d="M20.2 17.2H22.2M12.3 16.6H14.6M27.8 16.6H30.1" stroke="#7d7873" stroke-width="0.9"/></g></svg>
<div class=t style="left:926.00px;top:977.57px;font-size:20.35px;line-height:20.35px;color:#8b4cf6;font-weight:400;letter-spacing:0.418px;">amazon.com</div>
<div class=t style="left:1108.70px;top:977.57px;font-size:20.35px;line-height:20.35px;color:#1f1d23;font-weight:400;letter-spacing:0.600px;">2407</div>
<div class=t style="left:1282.00px;top:977.57px;font-size:20.35px;line-height:20.35px;color:#1f1d23;font-weight:400;letter-spacing:0.200px;">N/A</div>
<div class=t style="left:1520.70px;top:977.57px;font-size:20.35px;line-height:20.35px;color:#1f1d23;font-weight:400;letter-spacing:0.600px;">65%</div>
<div class=t style="left:1722.40px;top:977.57px;font-size:20.35px;line-height:20.35px;color:#1f1d23;font-weight:400;letter-spacing:0.000px;">1</div>
<div class=t style="left:1948.00px;top:977.57px;font-size:20.35px;line-height:20.35px;color:#1f1d23;font-weight:400;letter-spacing:0.700px;">$32.72</div>
<div class=t style="left:2148.20px;top:977.57px;font-size:20.35px;line-height:20.35px;color:#1f1d23;font-weight:400;letter-spacing:0.600px;">$4.40</div>
<svg style="left:2313.2px;top:962.0px" width="26" height="26" viewBox="1 1 22 22"><path d="M12 17.27L18.18 21l-1.64-7.03L22 9.24l-7.19-.61L12 2 9.19 8.63 2 9.24l5.46 4.73L5.82 21z" fill="#ffb400"/></svg>
<svg style="left:2348.8px;top:962.0px" width="26" height="26" viewBox="1 1 22 22"><path d="M12 17.27L18.18 21l-1.64-7.03L22 9.24l-7.19-.61L12 2 9.19 8.63 2 9.24l5.46 4.73L5.82 21z" fill="#ffb400"/></svg>
<svg style="left:2384.2px;top:962.0px" width="26" height="26" viewBox="1 1 22 22"><path d="M12 17.27L18.18 21l-1.64-7.03L22 9.24l-7.19-.61L12 2 9.19 8.63 2 9.24l5.46 4.73L5.82 21z" fill="#ffb400"/></svg>
<div class=t style="left:2315.20px;top:993.47px;font-size:20.35px;line-height:20.35px;color:#1f1d23;font-weight:400;letter-spacing:-0.100px;">4</div>
<div class=a style="left:428.5px;top:1019.65px;width:1973.5px;height:1.5px;background:#e8e8eb"></div>
<div class=a style="left:448px;top:1041.4px;width:21.6px;height:21.6px;border:2.3px solid #737373;border-radius:2.5px;box-sizing:border-box"></div>
<div class=t style="left:512.60px;top:1041.57px;font-size:20.35px;line-height:20.35px;color:#1f1d23;font-weight:400;letter-spacing:-0.150px;">25.11.2024</div>
<div class=t style="left:674.20px;top:1027.77px;font-size:20.35px;line-height:20.35px;color:#8b4cf6;font-weight:400;letter-spacing:0.450px;">Kinetic</div>
<div class=t style="left:675.20px;top:1057.77px;font-size:20.35px;line-height:20.35px;color:#8b4cf6;font-weight:400;letter-spacing:0.450px;">Sand</div>
<svg style="left:823.1px;top:1026.8px" width="42.4" height="42.4" viewBox="0 0 42.4 42.4"><defs><clipPath id="av2"><circle cx="21.2" cy="21.2" r="21.2"/></clipPath></defs><g clip-path="url(#av2)"><rect width="42.4" height="42.4" fill="#fde8b6"/><path d="M5 44C6.5 36.5 12 33.6 21.2 33.6C30.4 33.6 36 36.5 37.5 44Z" fill="#4aa0f2"/><path d="M16 27H26.4V33.6C24.5 35.2 18 35.2 16 33.6Z" fill="#f3c0a0"/><ellipse cx="12.8" cy="17.6" rx="1.2" ry="1.8" fill="#f3bc98"/><ellipse cx="29.6" cy="17.6" rx="1.2" ry="1.8" fill="#f3bc98"/><path d="M13.6 9.5C13.6 6 16.5 3.4 21.2 3.4C25.9 3.4 28.8 6 28.8 9.5V21.5C28.8 25.5 25.5 28.2 21.2 28.2C16.9 28.2 13.6 25.5 13.6 21.5Z" fill="#f6c7a6"/><path d="M13.4 11.5C13 6 15.8 3 21.2 3C26.6 3 29.4 6 29 11.5C28 9.5 26 9.2 21.2 9.2C16.4 9.2 14.4 9.5 13.4 11.5Z" fill="#f28a1e"/><path d="M13.8 19C14.2 25.5 17 28.3 21.2 28.3C25.4 28.3 28.2 25.5 28.6 19C27.3 21.2 25.8 20.6 21.2 20.6C16.6 20.6 15.1 21.2 13.8 19Z" fill="#f0891c"/><ellipse cx="21.2" cy="23" rx="1.8" ry="1" fill="#b96a3a"/><rect x="14.6" y="15.6" width="5.6" height="4.4" rx="0.8" fill="none" stroke="#7d7873" stroke-width="0.9"/><rect x="22.2" y="15.6" width="5.6" height="4.4" rx="0.8" fill="none" stroke="#7d7873" stroke-width="0.9"/><path d="M20.2 17.2H22.2M12.3 16.6H14.6M27.8 16.6H30.1" stroke="#7d7873" stroke-width="0.9"/></g></svg>
<div class=t style="left:926.00px;top:1041.57px;font-size:20.35px;line-height:20.35px;color:#8b4cf6;font-weight:400;letter-spacing:0.418px;">amazon.com</div>
<div class=t style="left:1108.70px;top:1041.57px;font-size:20.35px;line-height:20.35px;color:#1f1d23;font-weight:400;letter-spacing:0.600px;">120</div>
<div class=t style="left:1282.00px;top:1041.57px;font-size:20.35px;line-height:20.35px;color:#1f1d23;font-weight:400;letter-spacing:0.200px;">N/A</div>
<div class=t style="left:1521.70px;top:1041.57px;font-size:20.35px;line-height:20.35px;color:#1f1d23;font-weight:400;letter-spacing:0.600px;">30%</div>
<div class=t style="left:1722.40px;top:1041.57px;font-size:20.35px;line-height:20.35px;color:#1f1d23;font-weight:400;letter-spacing:0.000px;">2</div>
<div class=t style="left:1948.00px;top:1041.57px;font-size:20.35px;line-height:20.35px;color:#1f1d23;font-weight:400;letter-spacing:0.700px;">$13.40</div>
<div class=t style="left:2148.20px;top:1041.57px;font-size:20.35px;line-height:20.35px;color:#1f1d23;font-weight:400;letter-spacing:0.600px;">$5.78</div>
<svg style="left:2313.2px;top:1026.0px" width="26" height="26" viewBox="1 1 22 22"><path d="M12 17.27L18.18 21l-1.64-7.03L22 9.24l-7.19-.61L12 2 9.19 8.63 2 9.24l5.46 4.73L5.82 21z" fill="#ffb400"/></svg>
<svg style="left:2348.8px;top:1026.0px" width="26" height="26" viewBox="1 1 22 22"><path d="M12 17.27L18.18 21l-1.64-7.03L22 9.24l-7.19-.61L12 2 9.19 8.63 2 9.24l5.46 4.73L5.82 21z" fill="#ffb400"/></svg>
<svg style="left:2384.2px;top:1026.0px" width="26" height="26" viewBox="1 1 22 22"><path d="M12 17.27L18.18 21l-1.64-7.03L22 9.24l-7.19-.61L12 2 9.19 8.63 2 9.24l5.46 4.73L5.82 21z" fill="#ffb400"/></svg>
<div class=t style="left:2315.20px;top:1057.47px;font-size:20.35px;line-height:20.35px;color:#1f1d23;font-weight:400;letter-spacing:-0.100px;">4.3</div>
<div class=a style="left:428.5px;top:1083.65px;width:1973.5px;height:1.5px;background:#e8e8eb"></div>
<div class=a style="left:448px;top:1105.4px;width:21.6px;height:21.6px;border:2.3px solid #737373;border-radius:2.5px;box-sizing:border-box"></div>
<div class=t style="left:512.60px;top:1105.57px;font-size:20.35px;line-height:20.35px;color:#1f1d23;font-weight:400;letter-spacing:0.174px;">22.10.2024</div>
<div class=t style="left:675.20px;top:1105.57px;font-size:20.35px;line-height:20.35px;color:#8b4cf6;font-weight:400;letter-spacing:0.450px;">catan</div>
<svg style="left:823.1px;top:1090.8px" width="42.4" height="42.4" viewBox="0 0 42.4 42.4"><defs><clipPath id="av3"><circle cx="21.2" cy="21.2" r="21.2"/></clipPath></defs><g clip-path="url(#av3)"><rect width="42.4" height="42.4" fill="#fde8b6"/><path d="M5 44C6.5 36.5 12 33.6 21.2 33.6C30.4 33.6 36 36.5 37.5 44Z" fill="#4aa0f2"/><path d="M16 27H26.4V33.6C24.5 35.2 18 35.2 16 33.6Z" fill="#f3c0a0"/><ellipse cx="12.8" cy="17.6" rx="1.2" ry="1.8" fill="#f3bc98"/><ellipse cx="29.6" cy="17.6" rx="1.2" ry="1.8" fill="#f3bc98"/><path d="M13.6 9.5C13.6 6 16.5 3.4 21.2 3.4C25.9 3.4 28.8 6 28.8 9.5V21.5C28.8 25.5 25.5 28.2 21.2 28.2C16.9 28.2 13.6 25.5 13.6 21.5Z" fill="#f6c7a6"/><path d="M13.4 11.5C13 6 15.8 3 21.2 3C26.6 3 29.4 6 29 11.5C28 9.5 26 9.2 21.2 9.2C16.4 9.2 14.4 9.5 13.4 11.5Z" fill="#f28a1e"/><path d="M13.8 19C14.2 25.5 17 28.3 21.2 28.3C25.4 28.3 28.2 25.5 28.6 19C27.3 21.2 25.8 20.6 21.2 20.6C16.6 20.6 15.1 21.2 13.8 19Z" fill="#f0891c"/><ellipse cx="21.2" cy="23" rx="1.8" ry="1" fill="#b96a3a"/><rect x="14.6" y="15.6" width="5.6" height="4.4" rx="0.8" fill="none" stroke="#7d7873" stroke-width="0.9"/><rect x="22.2" y="15.6" width="5.6" height="4.4" rx="0.8" fill="none" stroke="#7d7873" stroke-width="0.9"/><path d="M20.2 17.2H22.2M12.3 16.6H14.6M27.8 16.6H30.1" stroke="#7d7873" stroke-width="0.9"/></g></svg>
<div class=t style="left:926.00px;top:1105.57px;font-size:20.35px;line-height:20.35px;color:#8b4cf6;font-weight:400;letter-spacing:0.418px;">amazon.com</div>
<div class=t style="left:1109.70px;top:1105.57px;font-size:20.35px;line-height:20.35px;color:#1f1d23;font-weight:400;letter-spacing:0.600px;">50</div>
<div class=t style="left:1282.00px;top:1105.57px;font-size:20.35px;line-height:20.35px;color:#1f1d23;font-weight:400;letter-spacing:0.200px;">N/A</div>
<div class=t style="left:1520.70px;top:1105.57px;font-size:20.35px;line-height:20.35px;color:#1f1d23;font-weight:400;letter-spacing:0.600px;">79%</div>
<div class=t style="left:1722.40px;top:1105.57px;font-size:20.35px;line-height:20.35px;color:#1f1d23;font-weight:400;letter-spacing:0.000px;">1</div>
<div class=t style="left:1948.00px;top:1105.57px;font-size:20.35px;line-height:20.35px;color:#1f1d23;font-weight:400;letter-spacing:0.700px;">$38.86</div>
<div class=t style="left:2148.20px;top:1105.57px;font-size:20.35px;line-height:20.35px;color:#1f1d23;font-weight:400;letter-spacing:0.600px;">$5.06</div>
<svg style="left:2313.2px;top:1090.0px" width="26" height="26" viewBox="1 1 22 22"><path d="M12 17.27L18.18 21l-1.64-7.03L22 9.24l-7.19-.61L12 2 9.19 8.63 2 9.24l5.46 4.73L5.82 21z" fill="#ffb400"/></svg>
<svg style="left:2348.8px;top:1090.0px" width="26" height="26" viewBox="1 1 22 22"><path d="M12 17.27L18.18 21l-1.64-7.03L22 9.24l-7.19-.61L12 2 9.19 8.63 2 9.24l5.46 4.73L5.82 21z" fill="#ffb400"/></svg>
<svg style="left:2384.2px;top:1090.0px" width="26" height="26" viewBox="1 1 22 22"><path d="M12 17.27L18.18 21l-1.64-7.03L22 9.24l-7.19-.61L12 2 9.19 8.63 2 9.24l5.46 4.73L5.82 21z" fill="#ffb400"/></svg>
<div class=t style="left:2315.20px;top:1121.47px;font-size:20.35px;line-height:20.35px;color:#1f1d23;font-weight:400;letter-spacing:-0.100px;">4.1</div>
<div class=a style="left:428.5px;top:1147.65px;width:1973.5px;height:1.5px;background:#e8e8eb"></div>
<div class=a style="left:448px;top:1169.4px;width:21.6px;height:21.6px;border:2.3px solid #737373;border-radius:2.5px;box-sizing:border-box"></div>
<div class=t style="left:512.60px;top:1169.57px;font-size:20.35px;line-height:20.35px;color:#1f1d23;font-weight:400;letter-spacing:0.174px;">22.10.2024</div>
<div class=t style="left:675.20px;top:1169.57px;font-size:20.35px;line-height:20.35px;color:#8b4cf6;font-weight:400;letter-spacing:0.450px;">anker</div>
<svg style="left:823.1px;top:1154.8px" width="42.4" height="42.4" viewBox="0 0 42.4 42.4"><defs><clipPath id="av4"><circle cx="21.2" cy="21.2" r="21.2"/></clipPath></defs><g clip-path="url(#av4)"><rect width="42.4" height="42.4" fill="#fde8b6"/><path d="M5 44C6.5 36.5 12 33.6 21.2 33.6C30.4 33.6 36 36.5 37.5 44Z" fill="#4aa0f2"/><path d="M16 27H26.4V33.6C24.5 35.2 18 35.2 16 33.6Z" fill="#f3c0a0"/><ellipse cx="12.8" cy="17.6" rx="1.2" ry="1.8" fill="#f3bc98"/><ellipse cx="29.6" cy="17.6" rx="1.2" ry="1.8" fill="#f3bc98"/><path d="M13.6 9.5C13.6 6 16.5 3.4 21.2 3.4C25.9 3.4 28.8 6 28.8 9.5V21.5C28.8 25.5 25.5 28.2 21.2 28.2C16.9 28.2 13.6 25.5 13.6 21.5Z" fill="#f6c7a6"/><path d="M13.4 11.5C13 6 15.8 3 21.2 3C26.6 3 29.4 6 29 11.5C28 9.5 26 9.2 21.2 9.2C16.4 9.2 14.4 9.5 13.4 11.5Z" fill="#f28a1e"/><path d="M13.8 19C14.2 25.5 17 28.3 21.2 28.3C25.4 28.3 28.2 25.5 28.6 19C27.3 21.2 25.8 20.6 21.2 20.6C16.6 20.6 15.1 21.2 13.8 19Z" fill="#f0891c"/><ellipse cx="21.2" cy="23" rx="1.8" ry="1" fill="#b96a3a"/><rect x="14.6" y="15.6" width="5.6" height="4.4" rx="0.8" fill="none" stroke="#7d7873" stroke-width="0.9"/><rect x="22.2" y="15.6" width="5.6" height="4.4" rx="0.8" fill="none" stroke="#7d7873" stroke-width="0.9"/><path d="M20.2 17.2H22.2M12.3 16.6H14.6M27.8 16.6H30.1" stroke="#7d7873" stroke-width="0.9"/></g></svg>
<div class=t style="left:926.00px;top:1169.57px;font-size:20.35px;line-height:20.35px;color:#8b4cf6;font-weight:400;letter-spacing:0.418px;">amazon.com</div>
<div class=t style="left:1108.70px;top:1169.57px;font-size:20.35px;line-height:20.35px;color:#1f1d23;font-weight:400;letter-spacing:0.600px;">2290</div>
<div class=t style="left:1282.00px;top:1169.57px;font-size:20.35px;line-height:20.35px;color:#1f1d23;font-weight:400;letter-spacing:0.200px;">N/A</div>
<div class=t style="left:1520.70px;top:1169.57px;font-size:20.35px;line-height:20.35px;color:#1f1d23;font-weight:400;letter-spacing:0.600px;">1%</div>
<div class=t style="left:1723.40px;top:1169.57px;font-size:20.35px;line-height:20.35px;color:#1f1d23;font-weight:400;letter-spacing:0.000px;">0</div>
<div class=t style="left:1948.00px;top:1169.57px;font-size:20.35px;line-height:20.35px;color:#1f1d23;font-weight:400;letter-spacing:0.700px;">$119.31</div>
<div class=t style="left:2148.20px;top:1169.57px;font-size:20.35px;line-height:20.35px;color:#1f1d23;font-weight:400;letter-spacing:0.600px;">$3.18</div>
<svg style="left:2313.2px;top:1154.0px" width="26" height="26" viewBox="1 1 22 22"><path d="M12 17.27L18.18 21l-1.64-7.03L22 9.24l-7.19-.61L12 2 9.19 8.63 2 9.24l5.46 4.73L5.82 21z" fill="#ffb400"/></svg>
<svg style="left:2348.8px;top:1154.0px" width="26" height="26" viewBox="1 1 22 22"><path d="M12 17.27L18.18 21l-1.64-7.03L22 9.24l-7.19-.61L12 2 9.19 8.63 2 9.24l5.46 4.73L5.82 21z" fill="#ffb400"/></svg>
<svg style="left:2384.2px;top:1154.0px" width="26" height="26" viewBox="1 1 22 22"><defs><clipPath id="hs42"><rect x="0" y="0" width="14.0" height="24"/></clipPath></defs><path d="M22 9.24l-7.19-.62L12 2 9.19 8.63 2 9.24l5.46 4.73L5.82 21 12 17.27 18.18 21l-1.63-7.03L22 9.24zM12 15.4l-3.76 2.27 1-4.28-3.32-2.88 4.38-.38L12 6.1l1.71 4.04 4.38.38-3.32 2.88 1 4.28L12 15.4z" fill="#ffb400"/><path d="M12 17.27L18.18 21l-1.64-7.03L22 9.24l-7.19-.61L12 2 9.19 8.63 2 9.24l5.46 4.73L5.82 21z" fill="#ffb400" clip-path="url(#hs42)"/></svg>
<div class=t style="left:2314.20px;top:1185.47px;font-size:20.35px;line-height:20.35px;color:#1f1d23;font-weight:400;letter-spacing:-0.100px;">2.6</div>
<div class=a style="left:428.5px;top:1211.65px;width:1973.5px;height:1.5px;background:#e8e8eb"></div>
<div class=a style="left:448px;top:1233.4px;width:21.6px;height:21.6px;border:2.3px solid #737373;border-radius:2.5px;box-sizing:border-box"></div>
<div class=t style="left:512.60px;top:1233.57px;font-size:20.35px;line-height:20.35px;color:#1f1d23;font-weight:400;letter-spacing:0.174px;">22.10.2024</div>
<div class=t style="left:675.20px;top:1219.77px;font-size:20.35px;line-height:20.35px;color:#8b4cf6;font-weight:400;letter-spacing:0.450px;">chef</div>
<div class=t style="left:675.20px;top:1249.77px;font-size:20.35px;line-height:20.35px;color:#8b4cf6;font-weight:400;letter-spacing:0.450px;">craft</div>
<svg style="left:823.1px;top:1218.8px" width="42.4" height="42.4" viewBox="0 0 42.4 42.4"><defs><clipPath id="av5"><circle cx="21.2" cy="21.2" r="21.2"/></clipPath></defs><g clip-path="url(#av5)"><rect width="42.4" height="42.4" fill="#fde8b6"/><path d="M5 44C6.5 36.5 12 33.6 21.2 33.6C30.4 33.6 36 36.5 37.5 44Z" fill="#4aa0f2"/><path d="M16 27H26.4V33.6C24.5 35.2 18 35.2 16 33.6Z" fill="#f3c0a0"/><ellipse cx="12.8" cy="17.6" rx="1.2" ry="1.8" fill="#f3bc98"/><ellipse cx="29.6" cy="17.6" rx="1.2" ry="1.8" fill="#f3bc98"/><path d="M13.6 9.5C13.6 6 16.5 3.4 21.2 3.4C25.9 3.4 28.8 6 28.8 9.5V21.5C28.8 25.5 25.5 28.2 21.2 28.2C16.9 28.2 13.6 25.5 13.6 21.5Z" fill="#f6c7a6"/><path d="M13.4 11.5C13 6 15.8 3 21.2 3C26.6 3 29.4 6 29 11.5C28 9.5 26 9.2 21.2 9.2C16.4 9.2 14.4 9.5 13.4 11.5Z" fill="#f28a1e"/><path d="M13.8 19C14.2 25.5 17 28.3 21.2 28.3C25.4 28.3 28.2 25.5 28.6 19C27.3 21.2 25.8 20.6 21.2 20.6C16.6 20.6 15.1 21.2 13.8 19Z" fill="#f0891c"/><ellipse cx="21.2" cy="23" rx="1.8" ry="1" fill="#b96a3a"/><rect x="14.6" y="15.6" width="5.6" height="4.4" rx="0.8" fill="none" stroke="#7d7873" stroke-width="0.9"/><rect x="22.2" y="15.6" width="5.6" height="4.4" rx="0.8" fill="none" stroke="#7d7873" stroke-width="0.9"/><path d="M20.2 17.2H22.2M12.3 16.6H14.6M27.8 16.6H30.1" stroke="#7d7873" stroke-width="0.9"/></g></svg>
<div class=t style="left:926.00px;top:1233.57px;font-size:20.35px;line-height:20.35px;color:#8b4cf6;font-weight:400;letter-spacing:0.418px;">amazon.com</div>
<div class=t style="left:1108.70px;top:1233.57px;font-size:20.35px;line-height:20.35px;color:#1f1d23;font-weight:400;letter-spacing:0.600px;">1303</div>
<div class=t style="left:1282.00px;top:1233.57px;font-size:20.35px;line-height:20.35px;color:#1f1d23;font-weight:400;letter-spacing:0.200px;">N/A</div>
<div class=t style="left:1521.70px;top:1233.57px;font-size:20.35px;line-height:20.35px;color:#1f1d23;font-weight:400;letter-spacing:0.600px;">34%</div>
<div class=t style="left:1722.40px;top:1233.57px;font-size:20.35px;line-height:20.35px;color:#1f1d23;font-weight:400;letter-spacing:0.000px;">2</div>
<div class=t style="left:1948.00px;top:1233.57px;font-size:20.35px;line-height:20.35px;color:#1f1d23;font-weight:400;letter-spacing:0.700px;">$12.92</div>
<div class=t style="left:2148.20px;top:1233.57px;font-size:20.35px;line-height:20.35px;color:#1f1d23;font-weight:400;letter-spacing:0.600px;">$4.47</div>
<svg style="left:2313.2px;top:1218.0px" width="26" height="26" viewBox="1 1 22 22"><path d="M12 17.27L18.18 21l-1.64-7.03L22 9.24l-7.19-.61L12 2 9.19 8.63 2 9.24l5.46 4.73L5.82 21z" fill="#ffb400"/></svg>
<svg style="left:2348.8px;top:1218.0px" width="26" height="26" viewBox="1 1 22 22"><path d="M12 17.27L18.18 21l-1.64-7.03L22 9.24l-7.19-.61L12 2 9.19 8.63 2 9.24l5.46 4.73L5.82 21z" fill="#ffb400"/></svg>
<svg style="left:2384.2px;top:1218.0px" width="26" height="26" viewBox="1 1 22 22"><path d="M12 17.27L18.18 21l-1.64-7.03L22 9.24l-7.19-.61L12 2 9.19 8.63 2 9.24l5.46 4.73L5.82 21z" fill="#ffb400"/></svg>
<div class=t style="left:2315.20px;top:1249.47px;font-size:20.35px;line-height:20.35px;color:#1f1d23;font-weight:400;letter-spacing:-0.100px;">3.1</div>
<div class=a style="left:2403.5px;top:826px;width:65px;height:460px;background:#fff"></div>
<div class=a style="left:2402.6px;top:760px;width:1.8px;height:600px;background:#e6e6e9"></div>
<div class=a style="left:428.5px;top:1276.3px;width:1973.5px;height:20.4px;background:#fafafa;border-bottom:1.5px solid #e6e6e9;box-sizing:border-box"></div>
<svg style="left:432.5px;top:1280.5px" width="11" height="12"><path d="M10 0.8V11.2L1 6Z" fill="#8a8a8a" stroke="#8a8a8a" stroke-width="1" stroke-linejoin="round"/></svg>
<div class=a style="left:450.8px;top:1281px;width:1435px;height:11px;background:#8b8b8b;border-radius:5.5px"></div>
<div class=t style="left:1676.00px;top:1333.77px;font-size:20.35px;line-height:20.35px;color:#3f3c44;font-weight:400;letter-spacing:0.100px;">Items per page:</div>
<div class=a style="left:1834.5px;top:1317.4px;width:127px;height:50px;border:1.3px solid #c4c4c4;border-radius:8px;box-sizing:border-box"></div>
<div class=t style="left:1856.00px;top:1333.77px;font-size:20.35px;line-height:20.35px;color:#3f3c44;font-weight:400;letter-spacing:0.000px;">10</div>
<div class=t style="left:2031.50px;top:1333.77px;font-size:20.35px;line-height:20.35px;color:#3f3c44;font-weight:400;letter-spacing:0.410px;">1-6 of 6</div>
<svg style="left:2145px;top:1329px" width="30" height="30" viewBox="0 0 24 24"><path d="M18.41 16.59L13.82 12l4.59-4.59L17 6l-6 6 6 6zM6 6h2v12H6z" fill="#c6c6c6"/></svg>
<svg style="left:2212.6px;top:1329px" width="30" height="30" viewBox="0 0 24 24"><path d="M15.41 7.41L14 6l-6 6 6 6 1.41-1.41L10.83 12z" fill="#c6c6c6"/></svg>
<svg style="left:2281.4px;top:1329px" width="30" height="30" viewBox="0 0 24 24"><path d="M10 6L8.59 7.41 13.17 12l-4.58 4.59L10 18l6-6z" fill="#c6c6c6"/></svg>
<svg style="left:2349.5px;top:1329px" width="30" height="30" viewBox="0 0 24 24"><path d="M5.59 7.41L10.18 12l-4.59 4.59L7 18l6-6-6-6zM16 6h2v12h-2z" fill="#c6c6c6"/></svg>
<div class=a style="left:2371px;top:1277.5px;width:68px;height:68px;border-radius:50%;background:#9166f6;box-shadow:0 4px 16px rgba(0,0,0,0.12)"></div>
<svg style="left:2389.5px;top:1294.5px" width="32" height="36" viewBox="0 0 32 36"><path d="M4 1H27A4 4 0 0 1 31 5V34.5L22 30.5H5A4 4 0 0 1 1 26.5V4A3 3 0 0 1 4 1Z" fill="#fff"/><path d="M6 21.5Q16 28 26 21.5" fill="none" stroke="#8a55f7" stroke-width="2" stroke-linecap="round"/></svg>
</div></body></html>
